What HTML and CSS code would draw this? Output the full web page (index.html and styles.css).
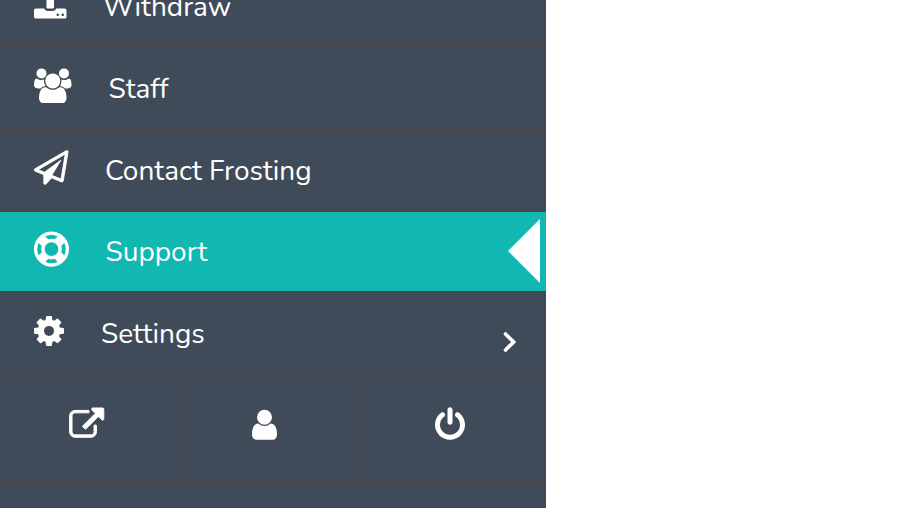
FILE: index.html
```html
<!DOCTYPE html>
<html lang="en">
<head>
<meta charset="utf-8">
<title>Menu</title>
<link rel="stylesheet" href="styles.css">
</head>
<body>
<nav class="sidebar">
  <a class="item item-first">
    <svg class="icon" viewBox="64 0 1664 1792" style="width:32.5px"><path d="M1344 1472q0-26-19-45t-45-19-45 19-19 45 19 45 45 19 45-19 19-45zm256 0q0-26-19-45t-45-19-45 19-19 45 19 45 45 19 45-19 19-45zm128-224v320q0 40-28 68t-68 28h-1472q-40 0-68-28t-28-68v-320q0-40 28-68t68-28h427q21 56 70.500 92t110.500 36h256q61 0 110.500-36t70.500-92h427q40 0 68 28t28 68zm-325-648q-17 40-59 40h-256v448q0 26-19 45t-45 19h-256q-26 0-45-19t-19-45v-448h-256q-42 0-59-40-17-39 14-69l448-448q18-19 45-19t45 19l448 448q31 30 14 69z"/></svg>
    <span class="label withdraw">Withdraw</span>
  </a>
  <a class="item">
    <svg class="icon" viewBox="0 -20 1920 1792" style="width:37.5px"><path d="M593 896q-162 5-265 128h-134q-82 0-138-40.500t-56-118.500q0-353 124-353 6 0 43.500 21t97.500 42.500 119 21.500q67 0 133-23-5 37-5 66 0 139 81 256zm1071 637q0 120-73 189.500t-194 69.500h-874q-121 0-194-69.500t-73-189.500q0-53 3.500-103.500t14-109 26.500-108.500 43-97.500 62-81 85.500-53.500 111.500-20q10 0 43 21.500t73 48 107 48 135 21.500 135-21.500 107-48 73-48 43-21.500q61 0 111.500 20t85.500 53.500 62 81 43 97.500 26.500 108.500 14 109 3.500 103.500zm-1024-1277q0 106-75 181t-181 75-181-75-75-181 75-181 181-75 181 75 75 181zm704 384q0 159-112.500 271.500t-271.500 112.500-271.500-112.500-112.500-271.500 112.500-271.500 271.500-112.500 271.500 112.500 112.500 271.500zm576 225q0 78-56 118.500t-138 40.500h-134q-103-123-265-128 81-117 81-256 0-29-5-66 66 23 133 23 59 0 119-21.500t97.500-42.500 43.500-21q124 0 124 353zm-128-609q0 106-75 181t-181 75-181-75-75-181 75-181 181-75 181 75 75 181z"/></svg>
    <span class="label staff">Staff</span>
  </a>
  <a class="item">
    <svg class="icon heavy" viewBox="-10 -30 1852 1852" style="width:35px"><path d="M1764 11q33 24 27 64l-256 1536q-5 29-32 45-14 8-31 8-11 0-24-5l-527-215-298 327q-18 21-47 21-14 0-23-4-19-7-30-23.500t-11-36.500v-452l-472-193q-37-14-40-55-3-39 32-59l1664-960q35-21 68 2zm-342 1499l221-1323-1434 827 336 137 863-639-478 797z"/></svg>
    <span class="label contact">Contact Frosting</span>
  </a>
  <a class="item active">
    <svg class="icon heavy" viewBox="-20 0 1832 1832" style="width:35px"><path d="M896 0q182 0 348 71t286 191 191 286 71 348-71 348-191 286-286 191-348 71-348-71-286-191-191-286-71-348 71-348 191-286 286-191 348-71zm0 128q-190 0-361 90l194 194q82-28 167-28t167 28l194-194q-171-90-361-90zm-678 1129l194-194q-28-82-28-167t28-167l-194-194q-90 171-90 361t90 361zm678 407q190 0 361-90l-194-194q-82 28-167 28t-167-28l-194 194q171 90 361 90zm0-384q159 0 271.500-112.500t112.500-271.500-112.500-271.500-271.500-112.500-271.500 112.500-112.500 271.500 112.500 271.500 271.500 112.500zm484-217l194 194q90-171 90-361t-90-361l-194 194q28 82 28 167t-28 167z"/></svg>
    <span class="label support">Support</span>
    <svg class="pointer" viewBox="0 0 32 64"><path d="M32 0V64L0 32z"/></svg>
  </a>
  <a class="item">
    <svg class="icon" viewBox="128 -20 1536 1792" style="width:30px"><path d="M1152 896q0-106-75-181t-181-75-181 75-75 181 75 181 181 75 181-75 75-181zm512-109v222q0 12-8 23t-20 13l-185 28q-19 54-39 91 35 50 107 138 10 12 10 25t-9 23q-27 37-99 108t-94 71q-12 0-26-9l-138-108q-44 23-91 38-16 136-29 186-7 28-36 28h-222q-14 0-24.500-8.500t-11.500-21.500l-28-184q-49-16-90-37l-141 107q-10 9-25 9-14 0-25-11-126-114-165-168-7-10-7-23 0-12 8-23 15-21 51-66.500t54-70.500q-27-50-41-99l-183-27q-13-2-21-12.500t-8-23.500v-222q0-12 8-23t19-13l186-28q14-46 39-92-40-57-107-138-10-12-10-24 0-10 9-23 26-36 98.500-107.500t94.500-71.500q13 0 26 10l138 107q44-23 91-38 16-136 29-186 7-28 36-28h222q14 0 24.500 8.500t11.500 21.500l28 184q49 16 90 37l142-107q9-9 24-9 13 0 25 10 129 119 165 170 7 8 7 22 0 12-8 23-15 21-51 66.500t-54 70.500q26 50 41 98l183 28q13 2 21 12.500t8 23.500z"/></svg>
    <span class="label settings">Settings</span>
    <svg class="chevron" viewBox="0 0 14 20"><path d="M2.500 2L10.700 10L2.500 18"/></svg>
  </a>
  <div class="actions">
    <a class="action"><svg class="icon heavy" viewBox="-30 -50 1832 1832" style="width:35px"><path d="M1408 928v320q0 119-84.500 203.500t-203.500 84.500h-832q-119 0-203.500-84.500t-84.500-203.500v-832q0-119 84.500-203.500t203.500-84.500h704q14 0 23 9t9 23v64q0 14-9 23t-23 9h-704q-66 0-113 47t-47 113v832q0 66 47 113t113 47h832q66 0 113-47t47-113v-320q0-14 9-23t23-9h64q14 0 23 9t9 23zm384-864v512q0 26-19 45t-45 19-45-19l-176-176-652 652q-10 10-23 10t-23-10l-114-114q-10-10-10-23t10-23l652-652-176-176q-19-19-19-45t19-45 45-19h512q26 0 45 19t19 45z"/></svg></a>
    <a class="action user"><svg class="icon" viewBox="256 -15 1280 1792" style="width:25px"><path d="M1536 1399q0 109-62.500 187t-150.500 78h-854q-88 0-150.500-78t-62.500-187q0-85 8.500-160.500t31.500-152 58.500-131 94-89 134.500-34.500q131 128 313 128t313-128q76 0 134.500 34.500t94 89 58.500 131 31.500 152 8.500 160.500zm-256-887q0 159-112.500 271.500t-271.500 112.500-271.500-112.500-112.500-271.500 112.500-271.500 271.500-112.500 271.500 112.500 112.500 271.500z"/></svg></a>
    <a class="action power"><svg class="icon" viewBox="128 -15 1536 1792" style="width:30px"><path d="M1664 896q0 156-61 298t-164 245-245 164-298 61-298-61-245-164-164-245-61-298q0-182 80.500-343t226.500-270q43-32 95.500-25t83.500 50q32 42 24.500 94.500t-49.500 84.500q-98 74-151.500 181t-53.500 228q0 104 40.500 198.500t109.500 163.500 163.500 109.500 198.500 40.500 198.500-40.500 163.500-109.500 109.500-163.500 40.500-198.500q0-121-53.500-228t-151.500-181q-42-32-49.500-84.500t24.500-94.500q31-43 84-50t95 25q146 109 226.500 270t80.500 343zm-640-768v640q0 52-38 90t-90 38-90-38-38-90v-640q0-52 38-90t90-38 90 38 38 90z"/></svg></a>
  </div>
  <div class="footer"></div>
</nav>
</body>
</html>
```
FILE: styles.css
```css
* { box-sizing: border-box; }
body {
  margin: 0;
  height: 508px;
  overflow: hidden;
  background: #fff;
  font-family: Nunito, Lato, sans-serif;
  color: #fff;
}
.sidebar {
  width: 546px;
  height: 508px;
  overflow: hidden;
  background: #404b59;
}
.item {
  display: flex;
  align-items: flex-start;
  gap: 37px;
  height: 82px;
  padding: 20px 30px 0 34px;
  border-bottom: 2px solid #494646;
}
.item-first { margin-top: -34px; }
.icon {
  flex: none;
  height: 35px;
  fill: #fff;
}
.heavy {
  overflow: visible;
  stroke: #fff;
  stroke-width: 50;
  stroke-linejoin: round;
}
.label {
  padding-top: 1px;
  font-size: 28px;
  line-height: 40px;
  font-weight: 400;
  white-space: nowrap;
}
.withdraw { margin-left: -0.500px; }
.contact { margin-left: -1px; }
.active {
  height: 81px;
  padding-right: 6px;
  background: #11b8b2;
}
.support {
  margin-left: -0.500px;
  padding-top: 0;
}
.pointer {
  width: 32px;
  height: 64px;
  margin: -13px 0 0 auto;
  fill: #fff;
}
.chevron {
  width: 14px;
  height: 20px;
  margin: 19px -1px 0 auto;
  fill: none;
  stroke: #fff;
  stroke-width: 3.6;
  stroke-linecap: round;
  stroke-linejoin: miter;
}
.actions {
  display: grid;
  grid-template-columns: 181px 182px 183px;
  height: 107px;
  border-bottom: 2px solid #494646;
}
.action {
  padding: 32px 0 0 69px;
  border-right: 2px solid #494646;
}
.user { padding-left: 71px; }
.power {
  padding-left: 71.500px;
  border-right: 0;
}
.footer {
  height: 26px;
  border-bottom: 1px solid #454850;
}
```
